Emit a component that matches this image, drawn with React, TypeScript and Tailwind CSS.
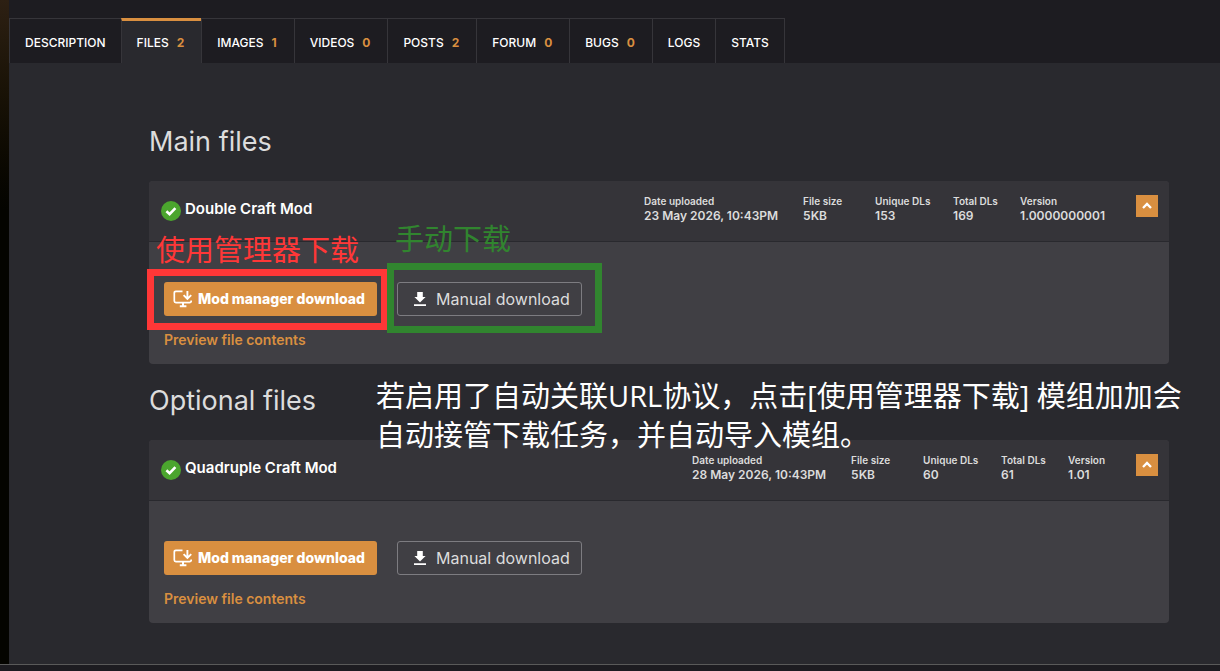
import { useState } from 'react';

type Tab = { label: string; count?: number };

type ModFile = {
  name: string;
  uploaded: string;
  size: string;
  uniqueDls: string;
  totalDls: string;
  version: string;
};

const tabs: Tab[] = [
  { label: 'Description' },
  { label: 'Files', count: 2 },
  { label: 'Images', count: 1 },
  { label: 'Videos', count: 0 },
  { label: 'Posts', count: 2 },
  { label: 'Forum', count: 0 },
  { label: 'Bugs', count: 0 },
  { label: 'Logs' },
  { label: 'Stats' },
];

const mainFile: ModFile = {
  name: 'Double Craft Mod',
  uploaded: '23 May 2026, 10:43PM',
  size: '5KB',
  uniqueDls: '153',
  totalDls: '169',
  version: '1.0000000001',
};

const optionalFile: ModFile = {
  name: 'Quadruple Craft Mod',
  uploaded: '28 May 2026, 10:43PM',
  size: '5KB',
  uniqueDls: '60',
  totalDls: '61',
  version: '1.01',
};

function CheckIcon() {
  return (
    <svg className="mt-1 h-5 w-5 shrink-0" viewBox="0 0 20 20" aria-hidden="true">
      <circle cx="10" cy="10" r="10" fill="#4ba52e" />
      <path d="M5.4 10.2l3.2 3 5.8-6" fill="none" stroke="#fff" strokeWidth="2.6" />
    </svg>
  );
}

function ManagerIcon() {
  return (
    <svg className="h-5 w-5 shrink-0" viewBox="0 0 20 20" fill="none" stroke="#fff" strokeWidth="1.7" aria-hidden="true">
      <path d="M10.5 2.3H3.9Q2.3 2.3 2.3 3.9V12Q2.3 13.6 3.9 13.6H17.6Q19.2 13.6 19.2 12V11.6" />
      <path d="M15.4 2V9.4M11.6 6.2L15.4 10L19.2 6.2" strokeWidth="1.9" />
      <path d="M11 13.6v4M7.8 17.3h6.6" strokeWidth="2" />
    </svg>
  );
}

function DownloadIcon() {
  return (
    <svg className="h-4 w-3 shrink-0" viewBox="0 0 12 16" fill="#fff" aria-hidden="true">
      <path d="M3.2 1h5.6v5h2.8L6 11.4.4 6h2.8zM0 13.2h12v1.9H0z" />
    </svg>
  );
}

function Stat({ label, value, className }: { label: string; value: string; className?: string }) {
  return (
    <div className={className}>
      <dt className="text-[10px] leading-3 font-semibold">{label}</dt>
      <dd className="text-xs leading-[18px] font-semibold">{value}</dd>
    </div>
  );
}

function FileCard({ file }: { file: ModFile }) {
  const [open, setOpen] = useState(true);

  return (
    <article className="overflow-hidden rounded bg-[#403f44]">
      <header className="flex h-[61px] items-start justify-between border-b border-[#29292e] bg-[#353439] pr-[11px] pl-3">
        <div className="flex gap-1 pt-4">
          <CheckIcon />
          <h3 className="text-[15px] leading-6 font-semibold text-white">{file.name}</h3>
        </div>
        <div className="flex items-start gap-[31px] pt-3.5">
          <dl className="flex gap-5 text-[#dcdcdc]">
            <Stat label="Date uploaded" value={file.uploaded} className="w-[139px]" />
            <Stat label="File size" value={file.size} className="w-[52px]" />
            <Stat label="Unique DLs" value={file.uniqueDls} className="w-[58px]" />
            <Stat label="Total DLs" value={file.totalDls} className="w-[47px]" />
            <Stat label="Version" value={file.version} />
          </dl>
          <button
            type="button"
            aria-label="Toggle file details"
            aria-expanded={open}
            onClick={() => setOpen(!open)}
            className="flex h-[22px] w-[22px] items-center justify-center bg-[#d98f40]"
          >
            <svg className="h-3 w-3" viewBox="0 0 12 12" aria-hidden="true">
              <path d="M2 8l4-4 4 4" fill="none" stroke="#fff" strokeWidth="2.3" />
            </svg>
          </button>
        </div>
      </header>
      {open && (
        <div className="px-[15px] pt-10 pb-3">
          <div className="flex gap-5">
            <button
              type="button"
              className="flex h-[34px] min-w-[213px] items-center gap-1.5 rounded-[3px] bg-[#d98f40] px-2 text-sm font-extrabold text-white"
            >
              <ManagerIcon />
              Mod manager download
            </button>
            <button
              type="button"
              className="flex h-[34px] items-center gap-2.5 rounded-[3px] border border-[#7d7c81] pr-[11px] pl-4 text-base text-[#dcdcdc]"
            >
              <DownloadIcon />
              Manual download
            </button>
          </div>
          <a href="#preview" className="mt-3 block w-fit text-sm leading-6 font-semibold text-[#d98f40]">
            Preview file contents
          </a>
        </div>
      )}
    </article>
  );
}

// Hand-written notes drawn over the page
function Annotations() {
  return (
    <div className="pointer-events-none absolute inset-0 font-['Open_Sans','Noto_Sans_CJK_SC',sans-serif] text-[29px] leading-[39px]">
      <p className="absolute top-[230px] left-[156px] whitespace-nowrap text-[#ff3737]">使用管理器下载</p>
      <div className="absolute top-[269px] left-[147px] h-[61px] w-[241px] border-7 border-[#ff3737]" />
      <p className="absolute top-[219px] left-[395px] whitespace-nowrap text-[#31852f]">手动下载</p>
      <div className="absolute top-[263px] left-[387px] h-[70px] w-[215px] border-7 border-[#31852f]" />
      <p className="absolute top-[376px] left-[376px] whitespace-nowrap text-white">
        若启用了自动关联URL协议，点击[使用管理器下载] 模组加加会
        <br />
        自动接管下载任务，并自动导入模组。
      </p>
    </div>
  );
}

export default function App() {
  const [activeTab, setActiveTab] = useState('Files');

  return (
    <div className="relative flex min-h-screen flex-col bg-[#1d1c21] font-['Inter',sans-serif]">
      <div className="flex grow">
        <div className="w-[9px] shrink-0 bg-linear-to-b from-[#2d2013] to-[#040400] to-[210px]" />
        <div className="flex grow flex-col">
          {/* Tabs */}
          <nav className="flex pt-[18px]">
            {tabs.map((tab) => (
              <button
                key={tab.label}
                type="button"
                onClick={() => setActiveTab(tab.label)}
                className={`flex h-[45px] items-center gap-2 border-l border-[#36353a] px-[15px] text-xs font-medium text-white uppercase last:border-r ${
                  activeTab === tab.label
                    ? 'border-t-3 border-t-[#d98f40] bg-[#29292e] pt-0.5'
                    : 'border-t pt-1'
                }`}
              >
                {tab.label}
                {tab.count !== undefined && (
                  <span className="pr-0.5 text-xs font-bold text-[#d98f40]">{tab.count}</span>
                )}
              </button>
            ))}
          </nav>

          {/* File lists */}
          <main className="grow bg-[#29292e] pt-[59px] pr-[51px] pb-10 pl-[140px]">
            <h2 className="mb-[19px] text-[27px] leading-10 text-[#dcdcdc]">Main files</h2>
            <FileCard file={mainFile} />
            <h2 className="mt-[17px] mb-[19px] text-[27px] leading-10 text-[#dcdcdc]">Optional files</h2>
            <FileCard file={optionalFile} />
          </main>
        </div>
      </div>
      <footer className="h-[7px] border-t border-[#5a5a5a] bg-[#1d1c21]" />
      <Annotations />
    </div>
  );
}
